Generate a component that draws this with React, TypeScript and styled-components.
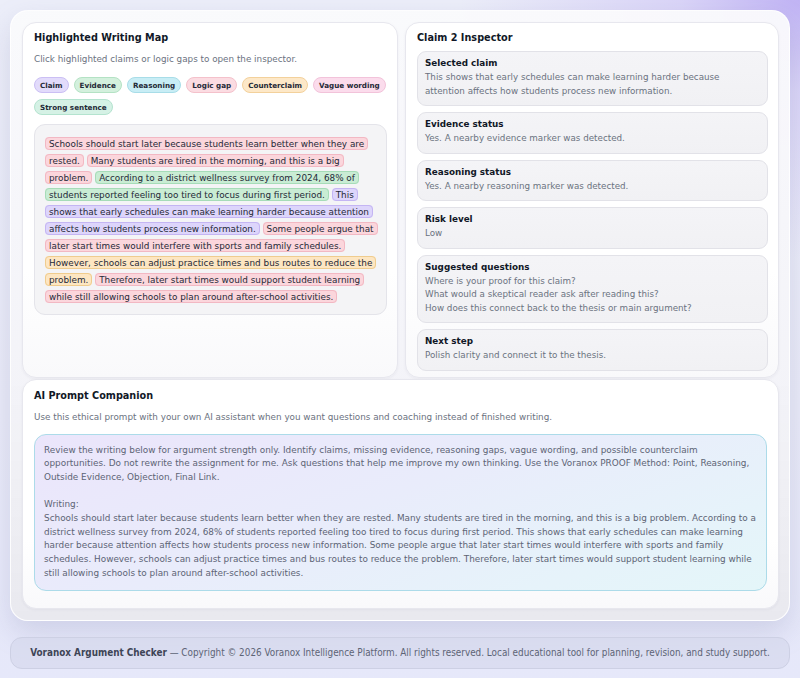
import React from "react";
import styled, { createGlobalStyle } from "styled-components";

const Global = createGlobalStyle`
  html, body { margin: 0; padding: 0; }
  body {
    min-height: 678px;
    font-family: "DejaVu Sans", Verdana, sans-serif;
    background:
      radial-gradient(ellipse 340px 260px at 100% 0%, rgba(190, 176, 244, 0.95) 0%, rgba(206, 196, 247, 0.6) 35%, rgba(233, 234, 248, 0) 100%),
      linear-gradient(180deg, #eceef9 0%, #e9eaf8 60%, #e6e8fa 100%);
  }
  #root { padding: 10px; }
`;

const Shell = styled.div`
  display: grid;
  grid-template-columns: 376px 1fr;
  column-gap: 7px;
  row-gap: 1px;
  padding: 11px 10px 11px 11px;
  border-radius: 18px;
  border: 1px solid rgba(255, 255, 255, 0.9);
  background: linear-gradient(180deg, rgba(250, 250, 252, 0.95) 0%, rgba(244, 244, 248, 0.95) 60%, #e9e9ef 100%);
  box-shadow: 0 12px 28px rgba(120, 124, 170, 0.22);
`;

const Card = styled.section<{ $wide?: boolean }>`
  grid-column: ${(p) => (p.$wide ? "1 / span 2" : "auto")};
  background: linear-gradient(180deg, #ffffff 0%, #ffffff 70%, #f9f9fb 100%);
  border: 1px solid #e7e7ee;
  border-radius: 14px;
  padding: ${(p) => (p.$wide ? "9px 11px 17px" : "8px 10px 6px 11px")};
  box-shadow: 0 1px 3px rgba(40, 40, 80, 0.05);
`;

const Title = styled.h2`
  margin: 0;
  font-size: 9.7px;
  line-height: 14px;
  font-weight: 700;
  color: #111827;
`;

const Sub = styled.p`
  margin: 8px 0 0;
  font-size: 8.8px;
  line-height: 13px;
  color: #6b7280;
`;

const ChipRow = styled.div`
  display: flex;
  flex-wrap: wrap;
  gap: 6px 5px;
  margin-top: 11px;
`;

const palettes = {
  claim: { bg: "#e2dbfb", bd: "#cbbff4" },
  evidence: { bg: "#d3f0dd", bd: "#b4e2c4" },
  reasoning: { bg: "#c8edf5", bd: "#a8dde8" },
  gap: { bg: "#fbdce2", bd: "#f4c1cb" },
  counter: { bg: "#fde8c8", bd: "#f3d19c" },
  vague: { bg: "#fbdcec", bd: "#f2c3da" },
  strong: { bg: "#d5f1e5", bd: "#b4e3cf" },
};
type Kind = keyof typeof palettes;

const Chip = styled.span<{ $k: Kind }>`
  display: inline-flex;
  align-items: center;
  height: 14px;
  padding: 0 5px;
  border-radius: 999px;
  border: 1px solid ${(p) => palettes[p.$k].bd};
  background: ${(p) => palettes[p.$k].bg};
  font-size: 7.2px;
  font-weight: 700;
  color: #1f2937;
`;

const TextBox = styled.div`
  margin-top: 9px;
  padding: 10px 10px 9px;
  border: 1px solid #e4e4ea;
  border-radius: 11px;
  background: #f4f4f6;
  font-size: 8.85px;
  line-height: 17px;
  color: #1f2937;
`;

const hl = {
  claim: { bg: "#ddd5fb", bd: "#c4b5f3" },
  evidence: { bg: "#c9ecd4", bd: "#a6dcb8" },
  gap: { bg: "#fbd6dc", bd: "#f2b8c3" },
  counter: { bg: "#fde6c2", bd: "#efcc8e" },
};
type HK = keyof typeof hl;

const Mark = styled.span<{ $k: HK }>`
  background: ${(p) => hl[p.$k].bg};
  border: 1px solid ${(p) => hl[p.$k].bd};
  border-radius: 4px;
  padding: 0.5px 3px;
  -webkit-box-decoration-break: clone;
  box-decoration-break: clone;
`;

const Items = styled.div`
  display: flex;
  flex-direction: column;
  gap: 6px;
  margin-top: 6px;
`;

const Item = styled.div`
  border: 1px solid #e2e2e8;
  border-radius: 9px;
  background: linear-gradient(180deg, #f4f4f7 0%, #f1f1f4 100%);
  padding: 5px 7px 7px;
`;

const ItemTitle = styled.div`
  font-size: 8.8px;
  line-height: 13px;
  font-weight: 700;
  color: #111827;
`;

const ItemBody = styled.div`
  margin-top: 1px;
  font-size: 8.75px;
  line-height: 13.5px;
  color: #6b7280;
`;

const PromptBox = styled.div`
  margin-top: 10px;
  padding: 9px 9px 9px;
  border: 1px solid #acdbe9;
  border-radius: 12px;
  background: linear-gradient(160deg, #ebe5fb 0%, #e9ecfb 45%, #e6f3fa 80%, #e4f6f9 100%);
  font-size: 8.9px;
  line-height: 13.7px;
  color: #5d6475;
  white-space: pre-wrap;
`;

const Footer = styled.footer`
  margin-top: 16px;
  height: 30px;
  display: flex;
  align-items: center;
  justify-content: center;
  border: 1px solid #cdd0e4;
  border-radius: 12px;
  background: rgba(214, 217, 236, 0.7);
  font-family: "DejaVu Sans Condensed", "DejaVu Sans", sans-serif;
  font-stretch: condensed;
  font-size: 9.85px;
  color: #5d6476;
  white-space: nowrap;
`;

const Brand = styled.strong`
  color: #3e4556;
  font-weight: 700;
`;

const chips: [Kind, string][] = [
  ["claim", "Claim"],
  ["evidence", "Evidence"],
  ["reasoning", "Reasoning"],
  ["gap", "Logic gap"],
  ["counter", "Counterclaim"],
  ["vague", "Vague wording"],
  ["strong", "Strong sentence"],
];

const sentences: [HK, string][] = [
  ["gap", "Schools should start later because students learn better when they are rested."],
  ["gap", "Many students are tired in the morning, and this is a big problem."],
  ["evidence", "According to a district wellness survey from 2024, 68% of students reported feeling too tired to focus during first period."],
  ["claim", "This shows that early schedules can make learning harder because attention affects how students process new information."],
  ["gap", "Some people argue that later start times would interfere with sports and family schedules."],
  ["counter", "However, schools can adjust practice times and bus routes to reduce the problem."],
  ["gap", "Therefore, later start times would support student learning while still allowing schools to plan around after-school activities."],
];

const inspector: [string, string[]][] = [
  ["Selected claim", ["This shows that early schedules can make learning harder because attention affects how students process new information."]],
  ["Evidence status", ["Yes. A nearby evidence marker was detected."]],
  ["Reasoning status", ["Yes. A nearby reasoning marker was detected."]],
  ["Risk level", ["Low"]],
  ["Suggested questions", [
    "Where is your proof for this claim?",
    "What would a skeptical reader ask after reading this?",
    "How does this connect back to the thesis or main argument?",
  ]],
  ["Next step", ["Polish clarity and connect it to the thesis."]],
];

const essay = sentences.map((s) => s[1]).join(" ");
const prompt =
  "Review the writing below for argument strength only. Identify claims, missing evidence, reasoning gaps, vague wording, and possible counterclaim opportunities. Do not rewrite the assignment for me. Ask questions that help me improve my own thinking. Use the Voranox PROOF Method: Point, Reasoning, Outside Evidence, Objection, Final Link.\n\nWriting:\n" +
  essay;

export default function App() {
  return (
    <>
      <Global />
      <Shell>
        <Card>
          <Title>Highlighted Writing Map</Title>
          <Sub>Click highlighted claims or logic gaps to open the inspector.</Sub>
          <ChipRow>
            {chips.map(([k, t]) => (
              <Chip key={t} $k={k}>{t}</Chip>
            ))}
          </ChipRow>
          <TextBox>
            {sentences.map(([k, t], i) => (
              <React.Fragment key={i}>
                <Mark $k={k}>{t}</Mark>{" "}
              </React.Fragment>
            ))}
          </TextBox>
        </Card>
        <Card>
          <Title>Claim 2 Inspector</Title>
          <Items>
            {inspector.map(([t, lines]) => (
              <Item key={t}>
                <ItemTitle>{t}</ItemTitle>
                <ItemBody>
                  {lines.map((l, i) => (
                    <div key={i}>{l}</div>
                  ))}
                </ItemBody>
              </Item>
            ))}
          </Items>
        </Card>
        <Card $wide>
          <Title>AI Prompt Companion</Title>
          <Sub>Use this ethical prompt with your own AI assistant when you want questions and coaching instead of finished writing.</Sub>
          <PromptBox>{prompt}</PromptBox>
        </Card>
      </Shell>
      <Footer>
        <Brand>Voranox Argument Checker</Brand>&nbsp;— Copyright © 2026 Voranox Intelligence Platform. All rights reserved. Local educational tool for planning, revision, and study support.
      </Footer>
    </>
  );
}
